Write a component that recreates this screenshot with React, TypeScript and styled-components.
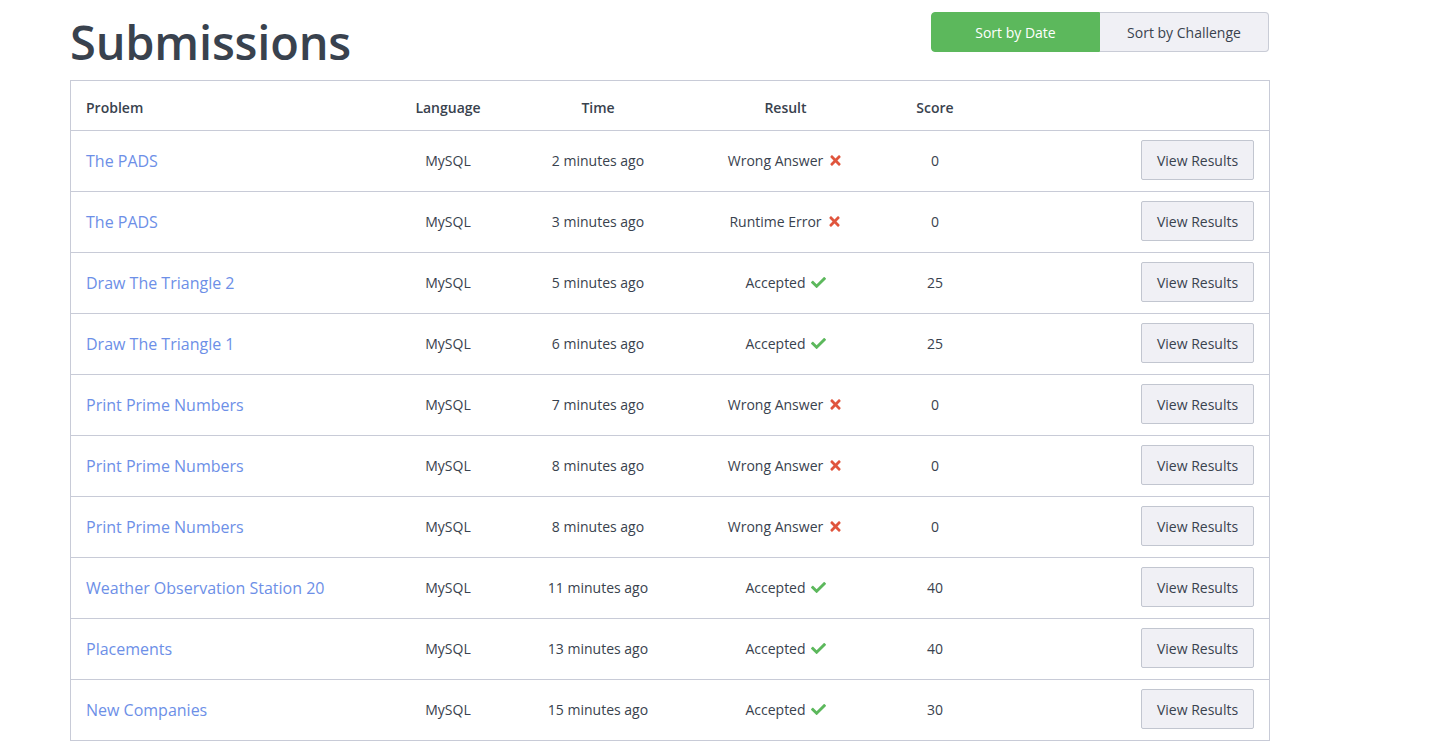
import React from "react";
import { styled, createGlobalStyle } from "styled-components";
import { FaCheck, FaTimes } from "react-icons/fa";

type Submission = {
  problem: string;
  time: string;
  result: "Accepted" | "Wrong Answer" | "Runtime Error";
  score: number;
};

const submissions: Submission[] = [
  { problem: "The PADS", time: "2 minutes ago", result: "Wrong Answer", score: 0 },
  { problem: "The PADS", time: "3 minutes ago", result: "Runtime Error", score: 0 },
  { problem: "Draw The Triangle 2", time: "5 minutes ago", result: "Accepted", score: 25 },
  { problem: "Draw The Triangle 1", time: "6 minutes ago", result: "Accepted", score: 25 },
  { problem: "Print Prime Numbers", time: "7 minutes ago", result: "Wrong Answer", score: 0 },
  { problem: "Print Prime Numbers", time: "8 minutes ago", result: "Wrong Answer", score: 0 },
  { problem: "Print Prime Numbers", time: "8 minutes ago", result: "Wrong Answer", score: 0 },
  { problem: "Weather Observation Station 20", time: "11 minutes ago", result: "Accepted", score: 40 },
  { problem: "Placements", time: "13 minutes ago", result: "Accepted", score: 40 },
  { problem: "New Companies", time: "15 minutes ago", result: "Accepted", score: 30 },
];

const GlobalStyle = createGlobalStyle`
  * { box-sizing: border-box; }
  body {
    margin: 0;
    background: #fff;
    font-family: "Open Sans", "Noto Sans", sans-serif;
    color: #39424e;
  }
`;

const Page = styled.main`
  width: 1200px;
  margin-left: 70px;
`;

const TitleBar = styled.div`
  height: 80px;
  display: flex;
  justify-content: space-between;
  align-items: flex-start;
`;

const Title = styled.h1`
  margin: 0;
  padding-top: 7px;
  font-size: 47px;
  font-weight: 600;
  line-height: 70px;
  color: #39424e;
  letter-spacing: -0.2px;
`;

const SortGroup = styled.div`
  display: flex;
  margin-top: 12px;
  margin-right: 1px;
`;

const SortButton = styled.button<{ $active?: boolean; $first?: boolean }>`
  width: 169px;
  height: 40px;
  font-family: inherit;
  font-size: 14px;
  cursor: pointer;
  border: 1px solid ${(p) => (p.$active ? "#5cb85c" : "#c9ccd6")};
  background: ${(p) => (p.$active ? "#5cb85c" : "#f0f0f5")};
  color: ${(p) => (p.$active ? "#fff" : "#39424e")};
  border-radius: ${(p) => (p.$first ? "4px 0 0 4px" : "0 4px 4px 0")};
  ${(p) => (!p.$first ? "border-left: none;" : "")}
`;

const Table = styled.div`
  border: 1px solid #c8cbd7;
`;

const Row = styled.div<{ $head?: boolean }>`
  display: grid;
  grid-template-columns: 302px 150px 150px 225px 74px 1fr;
  align-items: center;
  height: ${(p) => (p.$head ? "49px" : "61px")};
  border-top: ${(p) => (p.$head ? "none" : "1px solid #c8cbd7")};
  font-size: 14px;
  font-weight: ${(p) => (p.$head ? 600 : 400)};
  color: #39424e;
  padding: ${(p) => (p.$head ? "3px 0 0" : "0 0 2px")};
`;

const Cell = styled.div<{ $align?: "left" | "center" | "right" }>`
  text-align: ${(p) => p.$align ?? "center"};
  padding: ${(p) => (p.$align === "left" ? "0 0 0 15px" : p.$align === "right" ? "0 15px 0 0" : "0")};
  white-space: nowrap;
`;

const ProblemLink = styled.a`
  display: inline-block;
  padding-top: 2px;
  font-size: 16px;
  color: #6d8fe7;
  text-decoration: none;
  cursor: pointer;
`;

const ResultIcon = styled.span<{ $ok: boolean }>`
  display: inline-flex;
  vertical-align: -2px;
  margin-left: 5px;
  color: ${(p) => (p.$ok ? "#5cb85c" : "#e0553d")};
  font-size: 15px;
`;

const ViewButton = styled.button`
  height: 40px;
  width: 113px;
  font-family: inherit;
  font-size: 14px;
  color: #39424e;
  background: #f0f0f5;
  border: 1px solid #c2c6d0;
  border-radius: 2px;
  cursor: pointer;
`;

const App: React.FC = () => {
  return (
    <>
      <GlobalStyle />
      <Page>
        <TitleBar>
          <Title>Submissions</Title>
          <SortGroup>
            <SortButton $active $first>
              Sort by Date
            </SortButton>
            <SortButton>Sort by Challenge</SortButton>
          </SortGroup>
        </TitleBar>
        <Table>
          <Row $head>
            <Cell $align="left">Problem</Cell>
            <Cell>Language</Cell>
            <Cell>Time</Cell>
            <Cell>Result</Cell>
            <Cell>Score</Cell>
            <Cell />
          </Row>
          {submissions.map((s, i) => (
            <Row key={i}>
              <Cell $align="left">
                <ProblemLink>{s.problem}</ProblemLink>
              </Cell>
              <Cell>MySQL</Cell>
              <Cell>{s.time}</Cell>
              <Cell>
                {s.result}
                <ResultIcon $ok={s.result === "Accepted"}>
                  {s.result === "Accepted" ? <FaCheck /> : <FaTimes />}
                </ResultIcon>
              </Cell>
              <Cell>{s.score}</Cell>
              <Cell $align="right">
                <ViewButton>View Results</ViewButton>
              </Cell>
            </Row>
          ))}
        </Table>
      </Page>
    </>
  );
};

export default App;
